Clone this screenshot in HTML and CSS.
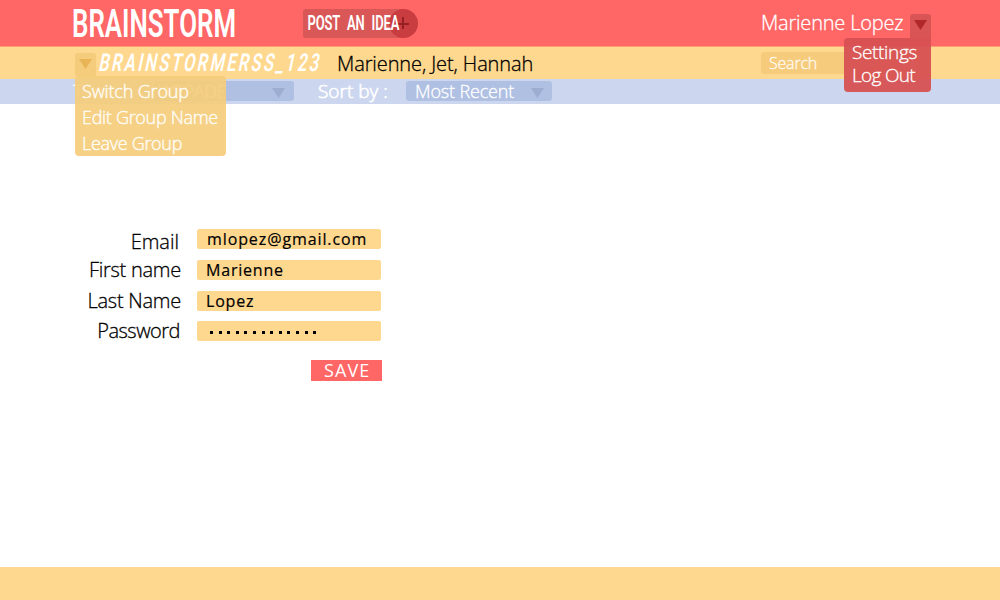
FILE: index.html
```
<!DOCTYPE html>
<html lang="en">
<head>
<meta charset="utf-8">
<title>Brainstorm</title>
<link rel="stylesheet" href="styles.css">
</head>
<body>
<header class="top">
  <svg class="logo" width="166" height="32" viewBox="0 0 166 32"><text x="0" y="29" textLength="164" lengthAdjust="spacingAndGlyphs">BRAINSTORM</text></svg>
  <div class="post">
    <span class="plus"></span>
    <svg class="post-label" width="94" height="20" viewBox="0 0 94 20"><text transform="translate(0.5 17) scale(0.65 1)" textLength="141.5">POST AN IDEA</text></svg>
  </div>
  <div class="user">
    <span class="user-name">Marienne Lopez</span>
    <div class="user-toggle"><svg width="13" height="10"><path d="M0 0H13L6.5 10Z"/></svg></div>
    <nav class="user-menu"><a>Settings</a><a>Log Out</a></nav>
  </div>
</header>
<section class="group">
  <div class="group-toggle"><svg width="13" height="10"><path d="M0 0H13L6.5 10Z"/></svg></div>
  <svg class="group-name" width="228" height="26" viewBox="0 0 228 26"><text transform="translate(0 21) skewX(-12) scale(0.67 1)" textLength="328">BRAINSTORMERSS_123</text></svg>
  <span class="members">Marienne, Jet, Hannah</span>
  <div class="search"><span>Search</span><svg width="18" height="18"><circle cx="7" cy="7" r="5"/><path d="M11 11L16 16"/></svg></div>
  <nav class="group-menu"><a>Switch Group</a><a>Edit Group Name</a><a>Leave Group</a></nav>
</section>
<section class="filters">
  <span class="type-label">Type :</span>
  <div class="select type"><span>WEPADE</span><svg width="13" height="10"><path d="M0 0H13L6.5 10Z"/></svg></div>
  <span class="sort-label">Sort by :</span>
  <div class="select sort"><span>Most Recent</span><svg width="13" height="10"><path d="M0 0H13L6.5 10Z"/></svg></div>
</section>
<main class="settings">
  <div class="row email"><span class="name">Email</span><span class="field">mlopez@gmail.com</span></div>
  <div class="row first"><span class="name">First name</span><span class="field">Marienne</span></div>
  <div class="row last"><span class="name">Last Name</span><span class="field">Lopez</span></div>
  <div class="row password"><span class="name">Password</span><span class="field dots"><i></i><i></i><i></i><i></i><i></i><i></i><i></i><i></i><i></i><i></i><i></i><i></i><i></i></span></div>
  <div class="save">SAVE</div>
</main>
<footer class="bottom"></footer>
</body>
</html>
```
FILE: styles.css
```
* { box-sizing: border-box; }
body { margin: 0; height: 600px; display: flex; flex-direction: column; background: #fff; font: 300 20px "Open Sans", "Noto Sans", sans-serif; -webkit-text-stroke: .3px; color: #000; overflow: hidden; white-space: nowrap; }
svg { display: block; flex: none; overflow: visible; }
svg text { font-family: Roboto, sans-serif; font-weight: 600; fill: #fff; -webkit-text-stroke: 0; }

.top { height: 47px; background: #f66; border-bottom: 1px solid #ff9a76; display: flex; align-items: flex-start; padding-left: 72px; }
.logo { margin-top: 8px; }
.logo text { font-size: 39.5px; }
.post { position: relative; width: 102px; height: 29px; margin: 9px 0 0 65px; background: #d95757; border-radius: 3px; }
.plus { position: absolute; left: 86px; top: 0; width: 29px; height: 29px; border-radius: 50%; background: #c93c40; }
.plus::before, .plus::after { content: ""; position: absolute; background: #961f24; }
.plus::before { left: 8px; top: 14px; width: 12px; height: 1.5px; }
.plus::after { left: 13px; top: 8px; width: 1.5px; height: 12px; }
.post-label { position: relative; margin: 4px 0 0 4px; }
.post-label text { font-size: 20px; word-spacing: 6px; }
.user { position: relative; display: flex; margin-left: 356px; width: 170px; }
.user-name { color: #fff; line-height: 46px; letter-spacing: -.2px; }
.user-toggle { width: 21px; height: 24px; margin: 14px 0 0 auto; padding: 6px 0 0 4px; background: #d95555; border-radius: 3px 3px 0 0; }
.user-toggle path { fill: #b0282b; }
.user-menu { position: absolute; z-index: 2; left: 83px; top: 38px; width: 87px; height: 54px; padding: 3px 0 0 8px; background: rgba(215, 80, 82, .94); border-radius: 4px 0 4px 4px; }
.user-menu a { display: block; color: #fff; font-size: 19px; line-height: 23px; letter-spacing: -.35px; }
.user-menu a + a { letter-spacing: -.7px; }

.group { position: relative; height: 32px; background: #ffd88f; display: flex; padding-left: 75px; }
.group-toggle { width: 21px; height: 23px; margin-top: 6px; padding: 6px 0 0 4px; background: #f4cc7c; border-radius: 3px 3px 0 0; }
.group-toggle path { fill: #e8b455; }
.group-name { margin: 3px 0 0 2px; }
.group-name text { font-size: 24.5px; }
.members { margin-left: 11px; line-height: 33px; letter-spacing: -.1px; }
.search { display: flex; justify-content: space-between; width: 167px; height: 22px; margin: 5px 72px 0 auto; padding: 0 9px 0 8px; background: #f6cc7c; border-radius: 3px; color: #fffaf0; font-size: 16px; line-height: 23px; letter-spacing: -.2px; }
.search svg { margin-top: 3px; fill: none; stroke: #fff; stroke-width: 2; }
.group-menu { position: absolute; z-index: 1; left: 75px; top: 29px; width: 151px; height: 80px; padding: 2px 0 0 7px; background: rgba(244, 204, 124, .93); border-radius: 4px; -webkit-text-stroke: .4px; }
.group-menu a { display: block; color: #fffcf5; font-size: 18px; line-height: 26px; letter-spacing: -.15px; }
.group-menu a + a { letter-spacing: -.3px; }

.filters { height: 25px; background: #ccd6ef; display: flex; padding-left: 73px; color: #fff; font-size: 19px; line-height: 25px; }
.type-label { width: 82px; }
.select { display: flex; justify-content: space-between; height: 20px; margin-top: 2px; padding: 0 8px 0 9px; background: #b0c0e3; border-radius: 3px; font-size: 18px; line-height: 21px; letter-spacing: -.15px; }
.select svg { margin-top: 7px; }
.select path { fill: #9dadd2; }
.type { width: 139px; padding-left: 3px; padding-right: 9px; letter-spacing: -.3px; }
.type span { -webkit-text-stroke: .6px; }
.sort-label { width: 88px; margin-left: 24px; -webkit-text-stroke: .6px; }
.sort { width: 146px; }

.settings { flex: 1; padding: 125px 0 0 80px; }
.row { display: flex; height: 20px; margin-bottom: 11px; line-height: 20px; }
.row.last { margin-bottom: 10px; }
.row.password { margin-bottom: 19px; }
.name { width: 102px; padding-right: 1px; text-align: right; letter-spacing: -.25px; }
.email .name { padding-right: 3px; line-height: 26px; letter-spacing: 0; }
.password .name { padding-right: 2px; letter-spacing: -.5px; }
.field { width: 184px; height: 20px; margin-left: 15px; padding-left: 9px; background: #ffd88f; border-radius: 2px; font-size: 16px; font-weight: 400; line-height: 21px; letter-spacing: .8px; -webkit-text-stroke: .2px; }
.email .field { padding-left: 10px; letter-spacing: .9px; }
.dots { display: flex; gap: 5.6px; padding: 10px 0 0 13px; }
.dots i { width: 3px; height: 3px; background: #000; }
.save { width: 71px; height: 21px; margin: 0 0 0 231px; background: #f66; color: #fff; font-size: 18px; font-weight: 400; line-height: 21px; letter-spacing: 1.1px; padding-left: 13px; -webkit-text-stroke: 0; }
.bottom { height: 33px; background: #ffd88f; }
```
